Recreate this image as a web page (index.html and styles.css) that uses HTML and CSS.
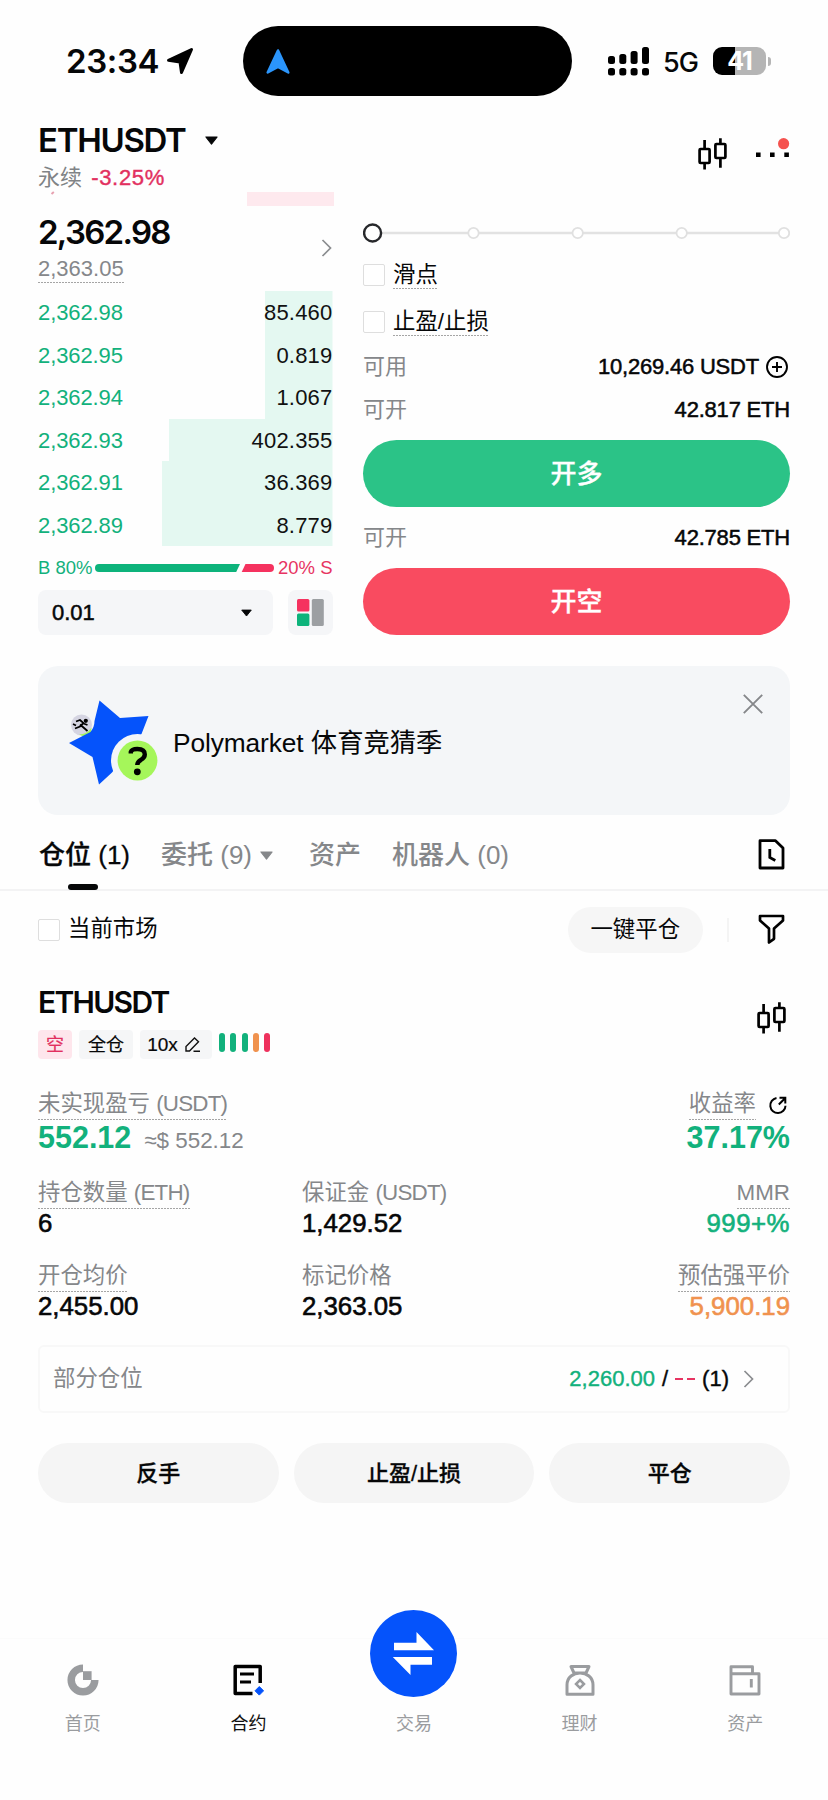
FILE: index.html
```html
<!DOCTYPE html>
<html lang="zh-CN">
<head>
<meta charset="utf-8">
<title>ETHUSDT</title>
<link rel="stylesheet" href="styles.css">
</head>
<body>
<svg width="0" height="0" class="defs">
  <symbol id="candles" viewBox="0 0 29 32">
    <g fill="none" stroke="#000" stroke-width="2.7"><rect x="1.6" y="11" width="10" height="14" rx="1"/><rect x="17.4" y="6" width="10" height="14" rx="1"/><path d="M6.6 2v9M6.6 25v6.400M22.400 0.300v6M22.400 20v9.700"/></g>
  </symbol>
  <symbol id="chevron" viewBox="0 0 11 18"><path d="M1.500 1 9.500 9 1.500 17" fill="none" stroke="currentColor" stroke-width="1.700"/></symbol>
  <symbol id="caret" viewBox="0 0 12 8"><path d="M.8.8h10.400L6 7.300z" fill="currentColor" stroke="currentColor" stroke-linejoin="round"/></symbol>
</svg>
<div class="phone">
  <div class="status">
    <div class="time">23:34</div>
    <svg class="loc" width="28" height="28" viewBox="0 0 28 28"><path d="M2.500 13.300 25.500 2.500 15.500 25.500 14 15z" stroke="#000" stroke-width="3" stroke-linejoin="round"/></svg>
    <div class="island"><svg width="26" height="27" viewBox="0 0 26 27"><path d="M13 2.500 23.300 24.500 13 19 2.700 24.500z" fill="#2b95fb" stroke="#2b95fb" stroke-width="2.500" stroke-linejoin="round"/></svg></div>
    <svg class="signal" width="42" height="30" viewBox="0 0 42 30"><rect x="0" y="9" width="7" height="8" rx="2.500"/><rect x="11.300" y="7" width="7" height="10" rx="2.500"/><rect x="22.600" y="4" width="7" height="13" rx="2.500"/><rect x="34" y="0" width="7" height="17" rx="2.500"/><rect x="0" y="21" width="7" height="7.500" rx="2.500"/><rect x="11.300" y="21" width="7" height="7.500" rx="2.500"/><rect x="22.600" y="21" width="7" height="7.500" rx="2.500"/><rect x="34" y="21" width="7" height="7.500" rx="2.500"/></svg>
    <div class="net">5G</div>
    <div class="battery"><span>41</span></div><i class="nub"></i>
  </div>

  <header class="head">
    <div>
      <div class="pair">ETHUSDT <svg width="13" height="9"><use href="#caret"/></svg></div>
      <div class="sub">永续 <b>-3.25%</b></div>
    </div>
    <div class="head-icons">
      <svg width="29" height="32"><use href="#candles"/></svg>
      <svg width="34" height="32" viewBox="0 0 34 32"><path d="M0 14.500h4.600v4.600H0zM14 14.500h4.600v4.600H14zM28.300 14.500h4.600v4.600h-4.600z"/><circle cx="27.600" cy="5.700" r="5.600" fill="#f5524e"/></svg>
    </div>
  </header>

  <main class="trade">
    <section class="book">
      <div class="ask-edge"><i class="tick"></i><i class="ask-bar"></i></div>
      <div class="last">
        <div><div class="price">2,362.98</div><div class="mark"><span class="dot">2,363.05</span></div></div>
        <svg class="gray" width="11" height="18"><use href="#chevron"/></svg>
      </div>
      <div class="rows">
        <div class="row"><span>2,362.98</span><em style="--w:67.5px">85.460</em></div>
        <div class="row"><span>2,362.95</span><em style="--w:67.5px">0.819</em></div>
        <div class="row"><span>2,362.94</span><em style="--w:67.5px">1.067</em></div>
        <div class="row"><span>2,362.93</span><em style="--w:163.5px">402.355</em></div>
        <div class="row"><span>2,362.91</span><em style="--w:170.5px">36.369</em></div>
        <div class="row"><span>2,362.89</span><em style="--w:170.5px">8.779</em></div>
      </div>
      <div class="ratio"><span class="green">B 80%</span><svg width="180" height="8" viewBox="0 0 180 8"><path d="M4 0h141l-3.800 8H4a4 4 0 0 1 0-8z" fill="#0db37b"/><path d="M150.500 0H175a4 4 0 0 1 0 8h-28.300z" fill="#f5325f"/></svg><span class="red">20% S</span></div>
      <div class="controls">
        <div class="select"><span>0.01</span><svg width="11" height="8"><use href="#caret"/></svg></div>
        <div class="view"><svg width="27" height="27" viewBox="0 0 27 27"><rect width="12.400" height="12.400" rx="1.500" fill="#f5325f"/><rect y="14.600" width="12.400" height="12.400" rx="1.500" fill="#0db37b"/><rect x="14.800" width="12" height="27" rx="1.500" fill="#9c9fa2"/></svg></div>
      </div>
    </section>

    <section class="order">
      <svg class="slider" width="427" height="20" viewBox="0 0 427 20"><path d="M19 10h398" stroke="#e2e2e2" stroke-width="2.300"/><g fill="#fff" stroke="#e0e0e0" stroke-width="1.800"><circle cx="110.500" cy="10" r="5.200"/><circle cx="214.700" cy="10" r="5.200"/><circle cx="318.700" cy="10" r="5.200"/><circle cx="421" cy="10" r="5.200"/></g><circle cx="9.600" cy="10" r="8.500" fill="#fff" stroke="#27282b" stroke-width="2.400"/></svg>
      <label class="check"><i class="box"></i><span class="dot">滑点</span></label>
      <label class="check"><i class="box"></i><span class="dot">止盈/止损</span></label>
      <div class="kv first"><span>可用</span><b>10,269.46 USDT<svg width="24" height="24" viewBox="0 0 24 24" fill="none" stroke="#000" stroke-width="1.900"><circle cx="12" cy="12" r="10"/><path d="M12 7v10M7 12h10"/></svg></b></div>
      <div class="kv second"><span>可开</span><b>42.817 ETH</b></div>
      <button class="cta long">开多</button>
      <div class="kv third"><span>可开</span><b>42.785 ETH</b></div>
      <button class="cta short">开空</button>
    </section>
  </main>

  <aside class="banner">
    <svg width="96" height="92" viewBox="64 696 96 92">
      <circle cx="81.500" cy="724" r="10.500" fill="#d5d5e2"/>
      <path d="M79 733.500q8 0 12.500-7l-.5 6-5 4z" fill="#a5f65a"/>
      <path d="M99.500 699.500 120 717l28.500-2-7 18-29.500 38.500-13 12-6.500-27.500-23.500-14L90.500 731q4-5 4-11z" fill="#0553fb"/>
      <circle cx="137.500" cy="759.500" r="26.500" fill="#f4f6f8"/>
      <circle cx="137.500" cy="759.500" r="19.900" fill="#a5f65a"/>
      <circle cx="85.800" cy="719.800" r="2.100"/>
      <path d="m76 720.500 4-1.500 3.500 3-3.500 3.500-5 2M80 723.500l7.500 6.500M83.500 722.500l4 1.500M73 723l3 1.500" fill="none" stroke="#000" stroke-width="1.800"/>
      <path d="M130.800 752.500v-1.500q1-3 6.500-3 7.500 0 7.500 5.500 0 3-4 5.500-3.500 2-3.500 5" fill="none" stroke="#000" stroke-width="4.400"/>
      <circle cx="137.300" cy="770.800" r="3.400"/>
    </svg>
    <div class="banner-text"><span class="word">Polymarket</span> 体育竞猜季</div>
    <svg class="close" width="20" height="20" viewBox="0 0 20 20"><path d="m.8.8 18.400 18.400m0-18.400L.8 19.200" stroke="#85878a" stroke-width="1.900"/></svg>
  </aside>

  <nav class="tabs">
    <div class="tab t1 active">仓位 (1)</div>
    <div class="tab t2">委托 (9)<svg width="13" height="9"><use href="#caret"/></svg></div>
    <div class="tab t3">资产</div>
    <div class="tab t4">机器人 (0)</div>
    <svg class="hist" width="27" height="31" viewBox="0 0 27 31" fill="none" stroke="#000" stroke-width="2.800"><path d="M2 1.700h15.500L25 9v20H2z" stroke-linejoin="round"/><path d="M11.800 10v8.500l5.500 3"/></svg>
  </nav>

  <div class="filter">
    <label class="check"><i class="box"></i><span>当前市场</span></label>
    <div class="filter-right">
      <button class="pill">一键平仓</button><i class="sep"></i>
      <svg width="27" height="31" viewBox="0 0 27 31"><path d="M2 2h23v4.500l-9 8v10.300l-5 3.700V14.500l-9-8z" fill="none" stroke="#000" stroke-width="2.700" stroke-linejoin="round"/></svg>
    </div>
  </div>

  <article class="position">
    <div class="pos-head">
      <div>
        <div class="pos-pair">ETHUSDT</div>
        <div class="tags">
          <span class="tag pink">空</span><span class="tag all">全仓</span>
          <span class="tag lev">10x<svg width="17" height="17" viewBox="0 0 17 17" fill="none" stroke="#111" stroke-width="1.400"><path d="M2 15v-4.500L10.500 2l4 3.800-9 9.200zM9.500 15.300H16"/></svg></span>
          <span class="risk"><i></i><i></i><i></i><i class="o"></i><i class="r"></i></span>
        </div>
      </div>
      <svg width="29" height="32"><use href="#candles"/></svg>
    </div>
    <div class="stats top">
      <div><div class="lab"><span class="dot">未实现盈亏 <span class="unit">(USDT)</span></span></div><div class="big green">552.12<small>≈$ 552.12</small></div></div>
      <div class="end"><div class="lab"><span class="dot">收益率</span><svg width="20" height="20" viewBox="0 0 20 20" fill="none" stroke="#000" stroke-width="2"><path d="M8.500 3a7.600 7.600 0 1 0 9 7.700M10.800 9.500l6-6M11.500 2.800h5.800v5.700"/></svg></div><div class="big green">37.17%</div></div>
    </div>
    <div class="stats mid">
      <div><div class="lab"><span class="dot">持仓数量 <span class="unit">(ETH)</span></span></div><div class="val">6</div></div>
      <div><div class="lab"><span>保证金 <span class="unit">(USDT)</span></span></div><div class="val">1,429.52</div></div>
      <div class="end"><div class="lab"><span class="dot">MMR</span></div><div class="val green mmr">999+%</div></div>
    </div>
    <div class="stats low">
      <div><div class="lab"><span class="dot">开仓均价</span></div><div class="val">2,455.00</div></div>
      <div><div class="lab"><span>标记价格</span></div><div class="val">2,363.05</div></div>
      <div class="end"><div class="lab"><span class="dot">预估强平价</span></div><div class="val orange">5,900.19</div></div>
    </div>
    <div class="partial"><span>部分仓位</span><div class="tpsl"><span class="green">2,260.00</span><span>/</span><span class="dash"><i></i><i></i></span><span>(1)</span><svg class="gray" width="11" height="18"><use href="#chevron"/></svg></div></div>
    <div class="actions"><button>反手</button><button>止盈/止损</button><button>平仓</button></div>
  </article>

  <footer class="nav">
    <div class="item"><svg width="32" height="32" viewBox="0 0 32 32"><path d="M16 4.200a11.800 11.800 0 1 0 11.800 11.800" fill="none" stroke="#9a9c9f" stroke-width="7.500"/><path d="M16 7.200h8.600V16H16z" fill="#9a9c9f"/></svg><span>首页</span></div>
    <div class="item on"><svg width="32" height="32" viewBox="0 0 32 32"><path d="M20.500 29.500H3.200v-27h25V19" fill="none" stroke="#000" stroke-width="3.500" stroke-linejoin="round"/><path d="M8 10h14M8 18h11" stroke="#000" stroke-width="3.200"/><path d="m27.300 22.500 4.300 4.300-4.300 4.300-4.300-4.300z" fill="#0553fb" stroke="#0553fb" stroke-linejoin="round"/></svg><span>合约</span></div>
    <div class="item center"><svg width="87" height="87" viewBox="0 0 87 87"><circle cx="43.500" cy="43.500" r="43.500" fill="#0553fb"/><path d="M24 32.700h22.500V22L64 40.300H24zM62 47v7.700H40.500V65L22.800 47z" fill="#fff"/></svg><span>交易</span></div>
    <div class="item"><svg width="32" height="32" viewBox="0 0 32 32" fill="none" stroke="#9a9c9f" stroke-width="3"><path d="M7 2.500h18L22 9H10zM3 30.300V21c0-16 26-16 26 0v9.300z" stroke-linejoin="round"/><path d="m16 16 4 4-4 4-4-4z" stroke-width="2.500"/></svg><span>理财</span></div>
    <div class="item"><svg width="32" height="32" viewBox="0 0 32 32" fill="none" stroke="#9a9c9f" stroke-width="2.900"><path d="M2 30V2.700h21.500v7M2 9.800h28V30H2zM22.300 15v8.500" stroke-linejoin="round"/></svg><span>资产</span></div>
  </footer>
</div>
</body>
</html>
```
FILE: styles.css
```css
* { box-sizing: border-box; }
body { margin: 0; background: #fefefe; color: #060708; font: 22px/1 "Liberation Sans", "Noto Sans CJK SC", sans-serif; }
svg { display: block; flex: none; }
.defs { position: absolute; }
i, em { font-style: normal; }
button { border: 0; padding: 0; color: inherit; font: inherit; }
.phone { width: 828px; height: 1800px; overflow: hidden; display: flex; flex-direction: column; }
.green { color: #12b17c; }
.red { color: #e73462; }
.orange { color: #f0924e; }
.gray { color: #8a8c8f; }

.status { height: 96px; padding: 26px 0 0 66px; display: flex; align-items: center; }
.time { width: 100px; font: 600 33px/40px Inter, sans-serif; letter-spacing: -.4px; }
.island { width: 329px; height: 70px; margin: 0 36px 0 49px; padding-left: 22px; border-radius: 35px; background: #000; display: flex; align-items: center; }
.signal { margin-top: 2px; }
.net { width: 49px; padding: 4px 0 0 13px; font: 500 27px/36px Inter, sans-serif; letter-spacing: -1px; }
.battery { width: 53px; height: 28px; margin-left: 14px; border-radius: 9px; background: linear-gradient(90deg, #000 22px, #b5b5b5 22px); color: #fff; text-align: center; font: 700 25px/28px Inter, sans-serif; letter-spacing: -1px; }
.nub { width: 3px; height: 9px; margin-left: 2px; border-radius: 0 4px 4px 0; background: #b5b5b5; }

.head { height: 96px; padding: 24px 38px 0 38px; display: flex; justify-content: space-between; }
.pair { height: 41px; display: flex; align-items: center; gap: 19px; font: 600 33px/41px Inter, sans-serif; letter-spacing: -1.300px; }
.sub { height: 34px; line-height: 34px; color: #808386; }
.sub b { margin-left: 3px; font-weight: 400; letter-spacing: .7px; color: #e2305f; -webkit-text-stroke: .4px; }
.head-icons { display: flex; gap: 29px; padding-top: 18px; }

.trade { padding: 0 38px; height: 444px; display: grid; grid-template-columns: 295.500px 427px; justify-content: space-between; }
.ask-edge { height: 14px; display: flex; justify-content: space-between; }
.tick { width: 3px; height: 1.500px; margin-left: 13px; background: #e7a0af; transform: rotate(-40deg); }
.ask-bar { width: 87px; background: #fee9ee; }
.last { height: 85px; padding: 6px 2px 8px 0; display: flex; justify-content: space-between; align-items: center; }
.price { font: 600 33px/40px Inter, sans-serif; letter-spacing: -1.700px; }
.mark { height: 31px; padding-top: 5px; color: #85878a; }
.dot { display: inline-block; line-height: 24px; padding-bottom: 2px; background: repeating-linear-gradient(90deg, #a5a5a5 0 2px, transparent 2px 3px) 0 100% / 100% 1.500px no-repeat; }
.row { height: 42.500px; line-height: 44px; display: flex; justify-content: space-between; color: #12b17c; }
.row span { letter-spacing: -.1px; }
.row em { width: 200px; margin-right: 1px; text-align: right; letter-spacing: .2px; color: #111; background: linear-gradient(#e4f8f1, #e4f8f1) 100% 0 / var(--w) 100% no-repeat; }
.ratio { height: 44px; display: flex; align-items: center; justify-content: space-between; font-size: 18.500px; padding-right: 1px; }
.ratio span { margin-top: 1px; white-space: nowrap; }
.controls { display: flex; justify-content: space-between; height: 45px; padding-right: 1px; }
.select { width: 235px; border-radius: 8px; background: #f5f6f8; padding: 1px 21px 0 14px; display: flex; align-items: center; justify-content: space-between; -webkit-text-stroke: .5px; }
.view { width: 45px; border-radius: 8px; background: #f5f6f8; display: grid; place-items: center; }

.slider { margin: 31px 0 8.500px; }
.check { height: 47px; display: flex; align-items: center; gap: 8px; font-size: 22.400px; }
.check .dot { margin-top: 2px; }
.box { width: 22px; height: 22px; border: 1.500px solid #dedede; border-radius: 2px; background: #fff; }
.kv { display: flex; justify-content: space-between; align-items: center; color: #85878a; }
.kv b { display: flex; align-items: center; gap: 6px; font-weight: 400; color: #060708; -webkit-text-stroke: .5px; letter-spacing: -.2px; }
.kv svg { margin-right: 1px; }
.kv.first { height: 43px; }
.kv.second { height: 42px; margin-bottom: 9px; }
.kv.third { height: 60.500px; padding-top: 1px; }
.cta { display: block; width: 427px; height: 67.500px; padding-top: 2px; border-radius: 34px; color: #fff; font-size: 26px; font-weight: 500; -webkit-text-stroke: .3px; }
.long { background: #2bc387; }
.short { background: #f94b60; }

.banner { height: 149px; margin: 30px 38px 0; padding: 31px 27px 0 26px; border-radius: 20px; background: #f4f6f8; display: flex; }
.banner-text { flex: 1; padding-left: 13px; line-height: 92px; font-size: 26.300px; }
.word { letter-spacing: -.1px; }
.close { margin-top: -3px; }

.tabs { height: 76px; padding: 0 43px 0 39px; border-bottom: 2px solid #f3f3f4; display: flex; font-size: 26px; line-height: 84px; font-weight: 500; color: #85878a; }
.tab { height: 74px; padding-top: 6px; display: flex; gap: 8px; align-items: center; white-space: pre; }
.t1 { width: 122px; position: relative; color: #060708; -webkit-text-stroke: .3px; }
.t1::after { content: ""; position: absolute; left: 29px; top: 69px; width: 30px; height: 6px; border-radius: 3px; background: #060708; }
.t2 { width: 148px; }
.t3 { width: 83px; }
.t4 { flex: 1; }
.hist { margin-top: 24px; }

.filter { height: 77px; padding: 0 43px 0 38px; display: flex; justify-content: space-between; align-items: center; }
.filter-right { display: flex; align-items: center; }
.pill { width: 135.500px; height: 46px; padding-top: 1px; border-radius: 23px; background: #f6f6f6; font-size: 22.400px; }
.sep { width: 2px; height: 24px; margin: 0 29px 0 24px; background: #f4f4f4; }

.position { padding: 0 38px; }
.pos-head { height: 117px; padding: 14px 4px 0 0; display: flex; justify-content: space-between; }
.pos-head > svg { margin-top: 20px; }
.pos-pair { height: 48px; font: 600 30px/40px Inter, sans-serif; letter-spacing: -1.700px; }
.tags { display: flex; gap: 7px; height: 30px; font-size: 18px; }
.tag { height: 29px; border-radius: 4px; background: #f5f6f7; display: flex; align-items: center; justify-content: center; -webkit-text-stroke: .2px; }
.pink { width: 34px; background: #fee6ec; color: #e2305f; }
.all { width: 54px; }
.lev { width: 72px; gap: 6px; padding-right: 4px; font-size: 19px; }
.risk { display: flex; gap: 5.300px; padding-top: 3px; }
.risk i { width: 6px; height: 19px; border-radius: 3px; background: #12b17c; }
.risk .o { background: #f0924e; }
.risk .r { background: #ee315d; }

.stats { display: grid; grid-template-columns: 264px 1fr 1fr; }
.stats.top { grid-template-columns: 1fr 1fr; height: 88px; padding-top: 7px; }
.mid { height: 84px; padding-top: 8px; }
.low { height: 88px; padding-top: 7px; }
.end { text-align: right; }
.lab { height: 28px; display: flex; font-size: 22.400px; line-height: 24px; color: #85878a; }
.unit { letter-spacing: -.8px; }
.end .lab { justify-content: flex-end; }
.lab svg { margin: 3px 2px 0 12px; }
.big { font: 700 30.500px/34px "Liberation Sans", sans-serif; }
.big small { margin-left: 13px; font-size: 22.400px; font-weight: 400; color: #85878a; }
.val { font-size: 25.800px; line-height: 29px; -webkit-text-stroke: .6px; }
.mmr { letter-spacing: .5px; }
.partial { height: 68px; padding: 0 34px 0 13px; border: 2px solid #f8f8f8; border-radius: 6px; display: flex; justify-content: space-between; align-items: center; color: #85878a; font-size: 22.400px; }
.tpsl { display: flex; align-items: center; gap: 7px; font-size: 22px; color: #060708; -webkit-text-stroke: .4px; }
.tpsl svg { margin-left: 7px; }
.dash { display: flex; gap: 4px; }
.dash i { width: 8px; height: 2px; background: #e73462; }
.actions { margin-top: 30px; display: grid; grid-template-columns: repeat(3, 1fr); gap: 15px; }
.actions button { height: 60px; padding-top: 1px; border-radius: 30px; background: #f5f5f5; font-weight: 500; -webkit-text-stroke: .3px; }

.nav { height: 162px; margin-top: auto; border-top: 1px solid #fbfbfb; display: grid; grid-template-columns: repeat(5, 1fr); font-size: 18px; color: #9a9c9f; }
.item { display: flex; flex-direction: column; align-items: center; padding-top: 25px; }
.item span { margin-top: 18px; line-height: 20px; }
.item.on { color: #111; }
.center { padding-top: 0; margin-top: -29px; }
.center span { margin-top: 17px; }
```
